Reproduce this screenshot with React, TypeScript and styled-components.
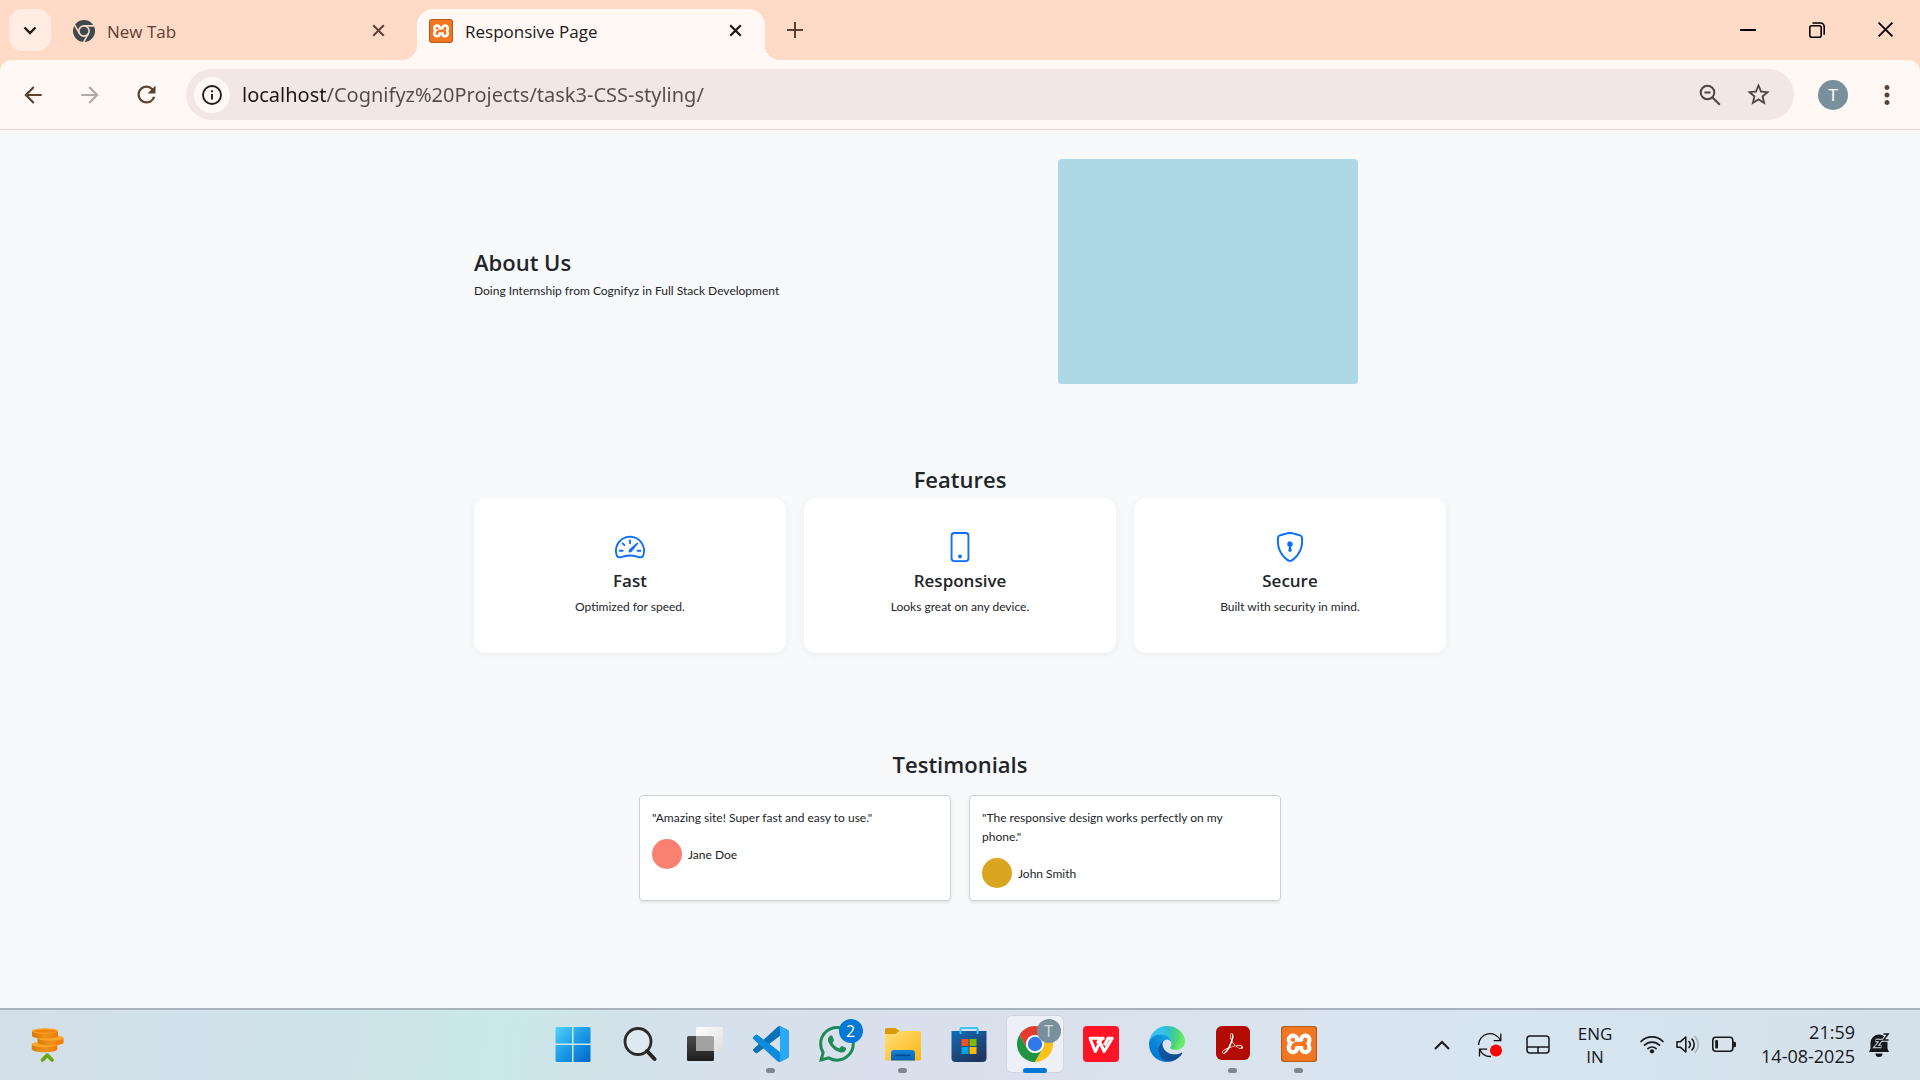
import React from "react";
import styled, { createGlobalStyle } from "styled-components";
import { BsSpeedometer2, BsPhone, BsShieldLock, BsWhatsapp } from "react-icons/bs";
import { MdArrowBack, MdArrowForward, MdRefresh, MdMoreVert, MdStarBorder } from "react-icons/md";
import { SiXampp, SiAdobeacrobatreader } from "react-icons/si";

const GlobalStyle = createGlobalStyle`
  *, *::before, *::after { box-sizing: border-box; }
  body {
    margin: 0;
    background: #f8f9fb;
    color: #212529;
    font-family: "Open Sans", "Noto Sans", sans-serif;
  }
  h1, h2, h3, p, figure, blockquote { margin: 0; }
  button {
    padding: 0;
    border: 0;
    background: none;
    color: inherit;
    font: inherit;
    cursor: pointer;
  }
  svg { display: block; flex: none; }
`;

const Window = styled.div`
  display: flex;
  flex-direction: column;
  min-height: 100vh;
`;

/* ---------- Browser frame ---------- */

const BrowserFrame = styled.header`
  background: #ffdac7;
`;

const TabStrip = styled.div`
  display: flex;
  align-items: flex-start;
  height: 60px;
  padding: 9px 0 0 9px;
`;

const TabSearch = styled.button`
  display: grid;
  place-items: center;
  width: 42px;
  height: 42px;
  margin-right: 10px;
  border-radius: 14px;
  background: #ffede4;
  color: #231a16;
`;

const Tab = styled.div<{ $active?: boolean }>`
  position: relative;
  display: flex;
  align-items: center;
  gap: 12px;
  flex: 0 1 ${(p) => (p.$active ? 348 : 356)}px;
  height: 51px;
  padding: 0 ${(p) => (p.$active ? 18 : 27)}px 8px 12px;
  border-radius: 16px 16px 0 0;
  background: ${(p) => (p.$active ? "#fff8f5" : "transparent")};
  color: ${(p) => (p.$active ? "#231a18" : "#5b4132")};

  &::before,
  &::after {
    content: "";
    display: ${(p) => (p.$active ? "block" : "none")};
    position: absolute;
    bottom: 0;
    width: 15px;
    height: 15px;
  }
  &::before {
    right: 100%;
    background: radial-gradient(circle at 0 0, transparent 15px, #fff8f5 15px);
  }
  &::after {
    left: 100%;
    background: radial-gradient(circle at 100% 0, transparent 15px, #fff8f5 15px);
  }
`;

const TabTitle = styled.span`
  flex: 1;
  padding-top: 2px;
  font-size: 17px;
  line-height: 24px;
  white-space: nowrap;
`;

const SmallButton = styled.button`
  display: grid;
  place-items: center;
  width: 24px;
  height: 24px;
`;

const NewTabButton = styled(SmallButton)`
  width: 32px;
  height: 42px;
  margin-left: 14px;
  color: #5b4132;
`;

const WindowControls = styled.div`
  display: flex;
  margin-left: auto;
  color: #000;
`;

const WindowButton = styled.button`
  display: grid;
  place-items: center;
  width: 69px;
  height: 41px;
`;

const Toolbar = styled.div`
  display: flex;
  align-items: center;
  height: 70px;
  padding: 0 18px 0 4px;
  border-bottom: 1px solid #f3d8d0;
  border-radius: 12px 12px 0 0;
  background: #fff8f5;
  color: #5b4132;
`;

const NavButton = styled.button`
  display: grid;
  place-items: center;
  width: 57px;
  height: 48px;

  &:disabled { color: #b3a8a4; }
`;

const Omnibox = styled.form`
  display: flex;
  align-items: center;
  flex: 1;
  height: 51px;
  margin: 0 24px 0 11px;
  padding: 0 18px 0 8px;
  border-radius: 26px;
  background: #f2e7e4;
  color: #4f4440;
`;

const SiteInfo = styled.button`
  display: grid;
  place-items: center;
  width: 36px;
  height: 36px;
  margin-right: 12px;
  border-radius: 50%;
  background: #fff8f5;
  color: #231a18;
`;

const Address = styled.input`
  flex: 1;
  min-width: 0;
  padding: 0;
  border: 0;
  outline: 0;
  /* the host is darker than the path that follows it */
  background: linear-gradient(90deg, #1f1613 84px, #574b47 84px);
  background-clip: text;
  -webkit-background-clip: text;
  color: transparent;
  font-family: "Noto Sans", sans-serif;
  font-size: 20px;
  line-height: 30px;
`;

const OmniButton = styled.button`
  display: grid;
  place-items: center;
  width: 36px;
  height: 36px;
  margin-left: 12px;
`;

const Profile = styled.button`
  width: 30px;
  height: 30px;
  margin-right: 24px;
  border-radius: 50%;
  background: #78909c;
  color: #fff;
  font-family: Roboto, sans-serif;
  font-size: 17px;
  line-height: 30px;
`;

const MenuButton = styled.button`
  display: grid;
  place-items: center;
  width: 30px;
  height: 36px;
`;

/* ---------- Page ---------- */

const Page = styled.main`
  flex: 1;
  width: 100%;
  max-width: 972px;
  margin: 0 auto;
  font-family: Lato, "Noto Sans", sans-serif;
  font-size: 12px;
  line-height: 19px;
`;

const Hero = styled.section`
  display: grid;
  grid-template-columns: 1fr 1fr;
  gap: 18px;
  align-items: center;
  padding: 29px 0 41px;
`;

const SectionTitle = styled.h2<{ $gap: number; $center?: boolean }>`
  margin-bottom: ${(p) => p.$gap}px;
  font-family: "Open Sans", sans-serif;
  font-size: 22px;
  font-weight: 600;
  line-height: 28px;
  text-align: ${(p) => (p.$center ? "center" : "left")};
`;

const HeroImage = styled.div`
  width: 300px;
  height: 225px;
  margin: 0 auto 4px;
  border-radius: 4px;
  background: #add8e6;
`;

const Section = styled.section`
  padding: 36px 0 61px;
`;

const FeatureGrid = styled.div`
  display: grid;
  grid-template-columns: repeat(3, 1fr);
  gap: 18px;
`;

const FeatureCard = styled.article`
  display: flex;
  flex-direction: column;
  align-items: center;
  padding: 34px 12px 37px;
  border-radius: 12px;
  background: #fff;
  box-shadow: 0 2px 8px rgba(0, 0, 0, 0.05);
  text-align: center;

  svg {
    margin-bottom: 8px;
    color: #0d6efd;
  }
`;

const FeatureTitle = styled.h3`
  margin-bottom: 5px;
  font-family: "Open Sans", sans-serif;
  font-size: 17px;
  font-weight: 550;
  line-height: 22px;
`;

const Quotes = styled.div`
  display: grid;
  grid-template-columns: repeat(2, 312px);
  justify-content: center;
  gap: 18px;
`;

const Quote = styled.figure`
  padding: 12px;
  border: 1px solid #d0d1d3;
  border-radius: 4px;
  background: #fff;
  box-shadow: 0 2px 3px rgba(0, 0, 0, 0.08);
`;

const QuoteText = styled.blockquote`
  padding-right: 12px;
`;

const Author = styled.figcaption`
  display: flex;
  align-items: center;
  gap: 6px;
  margin-top: 12px;
`;

const Avatar = styled.span<{ $color: string }>`
  width: 30px;
  height: 30px;
  border-radius: 50%;
  background: ${(p) => p.$color};
`;

/* ---------- Taskbar ---------- */

const Taskbar = styled.footer`
  display: grid;
  grid-template-columns: 28% auto 1fr;
  height: 72px;
  border-top: 2px solid #a8b3bd;
  background: linear-gradient(
    97deg,
    #d3dfe8 0%,
    #d1e0ea 10%,
    #cde4e9 20%,
    #c9e9ea 26%,
    #d3e2ea 32%,
    #d8e0ec 42%,
    #dadfec 50%,
    #d9e3ee 62%,
    #d7e5f0 78%,
    #d4e1eb 100%
  );
`;

const Widget = styled.button`
  justify-self: start;
  height: 70px;
  padding: 0 31px;
`;

const Apps = styled.nav`
  display: flex;
  gap: 10px;
  padding: 6px 5px 0 7px;
`;

const AppButton = styled.button<{ $active?: boolean }>`
  position: relative;
  display: flex;
  flex-direction: column;
  align-items: center;
  gap: 6px;
  width: 56px;
  height: 56px;
  padding-top: 10px;
  border-radius: 5px;
  background: ${(p) => (p.$active ? "#edf1f7" : "none")};
  box-shadow: ${(p) => (p.$active ? "0 0 0 1px #cfd6e1" : "none")};
`;

const Running = styled.span<{ $active?: boolean }>`
  flex: none;
  width: ${(p) => (p.$active ? 24 : 9)}px;
  height: 5px;
  border-radius: 3px;
  background: ${(p) => (p.$active ? "#0078d4" : "#7e868e")};
`;

const Badge = styled.span<{ $color: string; $ink: string }>`
  position: absolute;
  top: 3px;
  right: 2px;
  width: 24px;
  height: 24px;
  border-radius: 50%;
  background: ${(p) => p.$color};
  color: ${(p) => p.$ink};
  font-size: 16px;
  line-height: 24px;
  text-align: center;
`;

const WhatsappGlyph = styled(BsWhatsapp)`
  color: #1c8b57;
`;

const Tile = styled.span<{ $color: string }>`
  display: grid;
  place-items: center;
  flex: none;
  width: 36px;
  height: 36px;
  border-radius: 4px;
  background: ${(p) => p.$color};
  color: #fff;
`;

const AcrobatTile = styled(Tile)`
  width: 34px;
  height: 34px;
  margin-bottom: 2px;
  border-radius: 6px;
`;

const XamppTile = styled.span<{ $size: number }>`
  display: grid;
  place-items: center;
  flex: none;
  width: ${(p) => p.$size}px;
  height: ${(p) => p.$size}px;
  border-radius: 3px;
  background: linear-gradient(#fff, #fff) center / 84% 76% no-repeat, #c4631c;
  color: #f37623;
  box-shadow: inset 0 0 0 1px #b85b1a;

  svg {
    width: calc(100% - 2px);
    height: calc(100% - 2px);
  }
`;

const Tray = styled.div`
  display: flex;
  align-items: center;
  justify-content: flex-end;
  height: 70px;
  padding-right: 28px;
  color: #16191c;
  font-size: 17px;
  line-height: 24px;
`;

const TrayButton = styled.button<{ $width: number }>`
  display: flex;
  align-items: center;
  justify-content: center;
  gap: 12px;
  width: ${(p) => p.$width}px;
  height: 56px;
  line-height: 23px;
`;

const Clock = styled.button`
  margin: 0 13px;
  padding-bottom: 2px;
  font-size: 18px;
  line-height: 24px;
  text-align: right;
`;

const Line = styled.span`
  display: block;
`;

/* ---------- Drawings ---------- */

const Cross = ({ size, weight }: { size: number; weight: number }) => (
  <svg width={size} height={size} viewBox="0 0 16 16" fill="none" stroke="currentColor" strokeWidth={weight} aria-hidden>
    <path d="M1.5 1.5l13 13M14.5 1.5l-13 13" />
  </svg>
);

const StartIcon = () => (
  <svg width="36" height="36" viewBox="0 0 36 36" aria-hidden>
    <defs>
      <linearGradient id="start" x1="0" y1="0" x2="36" y2="36" gradientUnits="userSpaceOnUse">
        <stop offset="0" stopColor="#55d5ff" />
        <stop offset="0.5" stopColor="#1c9be6" />
        <stop offset="1" stopColor="#0067c8" />
      </linearGradient>
    </defs>
    <path
      fill="url(#start)"
      d="M2 1h15v16.500H.5V2.500A1.500 1.500 0 0 1 2 1zM18.500 1H34a1.500 1.500 0 0 1 1.500 1.500v15h-17zM.5 19H17v17H2A1.500 1.500 0 0 1 .5 34.500zM18.500 19h17v15.500A1.500 1.500 0 0 1 34 36H18.500z"
    />
  </svg>
);

const SearchIcon = () => (
  <svg width="36" height="36" viewBox="0 0 36 36" fill="none" aria-hidden>
    <circle cx="17" cy="15.500" r="13" stroke="#2b2b2b" strokeWidth="2.800" fill="#e6eef4" fillOpacity="0.600" />
    <path d="M26 25l7.500 8" stroke="#262626" strokeWidth="4" strokeLinecap="round" />
  </svg>
);

const TaskViewIcon = () => (
  <svg width="36" height="36" viewBox="0 0 36 36" aria-hidden>
    <defs>
      <linearGradient id="back" x1="0" y1="0" x2="0" y2="1">
        <stop offset="0" stopColor="#4b4b4b" />
        <stop offset="1" stopColor="#1f1f1f" />
      </linearGradient>
      <linearGradient id="front" x1="0" y1="0" x2="1" y2="1">
        <stop offset="0" stopColor="#fff" />
        <stop offset="1" stopColor="#dedede" />
      </linearGradient>
    </defs>
    <rect x="0" y="10" width="27" height="25" rx="1.500" fill="url(#back)" />
    <rect x="9" y="1" width="27" height="24" rx="1.500" fill="url(#front)" />
    <path d="M9 10h16.500A1.500 1.500 0 0 1 27 11.500V25H9z" fill="#a2a2a2" />
  </svg>
);

const CodeIcon = () => (
  <svg width="36" height="36" viewBox="0 0 24 24" aria-hidden>
    <path
      fill="#0a70b8"
      d="M23.150 2.587L18.210.210a1.494 1.494 0 0 0-1.705.290l-9.460 8.630-4.120-3.128a.999.999 0 0 0-1.276.057L.327 7.261A1 1 0 0 0 .326 8.740L3.899 12 .326 15.260a1 1 0 0 0 .001 1.479L1.650 17.940a.999.999 0 0 0 1.276.057l4.120-3.128 9.460 8.630a1.492 1.492 0 0 0 1.704.290l4.942-2.377A1.500 1.500 0 0 0 24 20.060V3.939a1.500 1.500 0 0 0-.850-1.352zm-5.146 14.861L10.826 12l7.178-5.448v10.896z"
    />
    <path
      fill="#0e8bdb"
      d="M1.650 6.060L.327 7.261A1 1 0 0 0 .326 8.740L16.500 23.500 18 22.500v-5.052L2.926 6.003a1 1 0 0 0-1.276.057z"
    />
    <path
      fill="#2aa9f4"
      d="M18.210.210l4.940 2.377A1.500 1.500 0 0 1 24 3.939V20.060a1.500 1.500 0 0 1-.850 1.353l-4.940 2.377a1.490 1.490 0 0 1-1.700-.290c.560.560 1.490.160 1.490-.600V1.100c0-.760-.930-1.160-1.490-.600a1.494 1.494 0 0 1 1.700-.290z"
    />
  </svg>
);

const FolderIcon = () => (
  <svg width="36" height="36" viewBox="0 0 36 36" aria-hidden>
    <defs>
      <linearGradient id="folder" x1="0" y1="0" x2="1" y2="1">
        <stop offset="0" stopColor="#ffdf78" />
        <stop offset="1" stopColor="#fbb615" />
      </linearGradient>
      <linearGradient id="tray" x1="0" y1="0" x2="0" y2="1">
        <stop offset="0" stopColor="#1583d8" />
        <stop offset="1" stopColor="#0765b8" />
      </linearGradient>
    </defs>
    <path d="M1.500 2H10c1.500 0 2.500 2.500 4.500 2.500V12H0V3.500A1.500 1.500 0 0 1 1.500 2z" fill="#dc9a05" />
    <path d="M0 8h10c2 0 2.500-3 5-3h19.500A1.500 1.500 0 0 1 36 6.500V33a1.500 1.500 0 0 1-1.500 1.500h-33A1.500 1.500 0 0 1 0 33z" fill="url(#folder)" />
    <path d="M6 34.500V27a3 3 0 0 1 3-3h18a3 3 0 0 1 3 3v7.500z" fill="url(#tray)" />
    <rect x="10" y="28.500" width="15.500" height="1.800" rx="0.900" fill="#084a8c" />
  </svg>
);

const StoreIcon = () => (
  <svg width="36" height="36" viewBox="0 0 36 36" aria-hidden>
    <defs>
      <linearGradient id="bag" x1="0" y1="0" x2="0.600" y2="1">
        <stop offset="0" stopColor="#0f6cb8" />
        <stop offset="1" stopColor="#22365f" />
      </linearGradient>
    </defs>
    <path d="M.5 5h35v27a4 4 0 0 1-4 4h-27a4 4 0 0 1-4-4z" fill="url(#bag)" />
    <path d="M9.500 8V3a1 1 0 0 1 1-1h15a1 1 0 0 1 1 1v5" fill="none" stroke="#38c6f4" strokeWidth="2" />
    <path d="M10.500 13h7v7h-7z" fill="#f25022" />
    <path d="M18.500 13h7v7h-7z" fill="#7fba00" />
    <path d="M10.500 21h7v7h-7z" fill="#00a4ef" />
    <path d="M18.500 21h7v7h-7z" fill="#ffb900" />
  </svg>
);

const ChromeIcon = () => (
  <svg width="36" height="36" viewBox="0 0 24 24" aria-hidden>
    <path fill="#e33b2e" d="M12 6h10.390A12 12 0 0 0 1.610 6l5.190 9A6 6 0 0 1 12 6z" />
    <path fill="#229342" d="M6.800 15L1.610 6A12 12 0 0 0 12 24l5.200-9A6 6 0 0 1 6.800 15z" />
    <path fill="#fbc116" d="M17.200 15L12 24A12 12 0 0 0 22.390 6H12a6 6 0 0 1 5.200 9z" />
    <circle cx="12" cy="12" r="6" fill="#fff" />
    <circle cx="12" cy="12" r="4.800" fill="#2f77ea" />
  </svg>
);

const ChromeFavicon = () => (
  <svg width="22" height="22" viewBox="0 0 24 24" aria-hidden>
    <circle cx="12" cy="12" r="12" fill="#3f484b" />
    <circle cx="12" cy="12" r="5.600" fill="none" stroke="#ffdac7" strokeWidth="1.700" />
    <path d="M12 6.400h11M7.150 14.800L1.650 5.300M16.850 14.800L11.400 24.300" stroke="#ffdac7" strokeWidth="1.700" />
  </svg>
);

const WpsGlyph = () => (
  <svg width="36" height="36" viewBox="0 0 36 36" fill="none" stroke="#fff" strokeWidth="3" strokeLinejoin="round" aria-hidden>
    <path d="M14.500 17.500l2.300-5.300H7L12.300 25.500 19 12.200h2.500" />
    <path d="M17.500 17.500l3.700 8L29.300 12.200H25l-3.600 7" />
  </svg>
);

const EdgeIcon = () => (
  <svg width="36" height="36" viewBox="0 0 256 256" aria-hidden>
    <defs>
      <linearGradient id="edgeLow" x1="63" y1="177" x2="241" y2="177" gradientUnits="userSpaceOnUse">
        <stop offset="0" stopColor="#0c59a4" />
        <stop offset="1" stopColor="#114a8b" />
      </linearGradient>
      <linearGradient id="edgeMid" x1="160" y1="100" x2="46" y2="224" gradientUnits="userSpaceOnUse">
        <stop offset="0" stopColor="#1b9de2" />
        <stop offset="0.200" stopColor="#1595df" />
        <stop offset="0.700" stopColor="#0680d7" />
        <stop offset="1" stopColor="#0078d4" />
      </linearGradient>
      <radialGradient id="edgeTop" cx="26" cy="45" r="220" gradientUnits="userSpaceOnUse">
        <stop offset="0" stopColor="#35c1f1" />
        <stop offset="0.300" stopColor="#34c1ed" />
        <stop offset="0.550" stopColor="#2fc2c8" />
        <stop offset="0.850" stopColor="#52d56f" />
        <stop offset="1" stopColor="#66eb6e" />
      </radialGradient>
    </defs>
    <g transform="translate(-4.630 -4.920)">
      <path
        fill="url(#edgeLow)"
        d="M235.680 195.460a93.730 93.730 0 0 1-10.540 4.710 101.870 101.870 0 0 1-35.900 6.460c-47.320 0-88.540-32.550-88.540-74.320A31.480 31.480 0 0 1 117.130 105c-42.800 1.800-53.800 46.400-53.800 72.530 0 73.880 68.090 81.370 82.760 81.370 7.910 0 19.840-2.300 27-4.560l1.310-.440a128.340 128.340 0 0 0 66.600-52.800 4 4 0 0 0-5.320-5.640z"
      />
      <path
        fill="url(#edgeMid)"
        d="M110.340 246.340A79.200 79.200 0 0 1 87.600 225a80.720 80.720 0 0 1 29.530-120c3.120-1.470 8.450-4.130 15.540-4a32.350 32.350 0 0 1 25.690 13 31.880 31.880 0 0 1 6.360 18.660c0-.210 24.460-79.600-80-79.600-43.900 0-80 41.660-80 78.210a130.150 130.150 0 0 0 12.110 56 128 128 0 0 0 156.380 67.110 75.550 75.550 0 0 1-62.780-8z"
      />
      <path
        fill="url(#edgeTop)"
        d="M156.940 153.780c-.810 1.050-3.300 2.500-3.300 5.660 0 2.610 1.700 5.120 4.720 7.230 14.380 10 41.490 8.680 41.560 8.680a59.560 59.560 0 0 0 30.270-8.350 61.380 61.380 0 0 0 30.430-52.880c.260-22.410-8-37.310-11.340-43.910C228.090 28.760 182.350 4.920 132.610 4.920a128 128 0 0 0-128 126.200c.480-36.540 36.800-66.050 80-66.050 3.500 0 23.460.340 42 10.070 16.340 8.580 24.900 18.940 30.850 29.210 6.180 10.670 7.280 24.150 7.280 29.520s-2.740 13.330-7.800 19.910z"
      />
    </g>
  </svg>
);

const CoinsIcon = () => (
  <svg width="34" height="36" viewBox="0 0 34 36" aria-hidden>
    <defs>
      <linearGradient id="coin" x1="0" y1="0" x2="1" y2="0">
        <stop offset="0" stopColor="#d87a0c" />
        <stop offset="0.500" stopColor="#f09217" />
        <stop offset="1" stopColor="#ee7a05" />
      </linearGradient>
    </defs>
    <path d="M.8 17.500v4.700c0 4 25.500 4 25.500 0v-4.700z" fill="url(#coin)" />
    <ellipse cx="13.500" cy="17.500" rx="12.800" ry="2.700" fill="#ffa629" />
    <path d="M6.500 11v4.500c0 4 26 4 26 0V11z" fill="url(#coin)" />
    <ellipse cx="19.500" cy="11" rx="13" ry="2.700" fill="#ffa629" />
    <path d="M1 4v4.700c0 4 26 4 26 0V4z" fill="url(#coin)" />
    <ellipse cx="14" cy="4" rx="13" ry="2.700" fill="#fca326" />
    <ellipse cx="14" cy="4.200" rx="11.500" ry="1.500" fill="#f08205" />
    <path d="M11.500 33l4.800-4.800L21 33" fill="none" stroke="#6aa811" strokeWidth="3.800" strokeLinecap="round" strokeLinejoin="round" />
  </svg>
);

const WifiIcon = () => (
  <svg width="24" height="24" viewBox="0 0 24 24" fill="none" stroke="currentColor" strokeWidth="1.700" strokeLinecap="round" aria-hidden>
    <path d="M1 8.500a15.600 15.600 0 0 1 22 0M4.500 12.200a10.600 10.600 0 0 1 15 0M8 15.700a5.600 5.600 0 0 1 8 0" />
    <circle cx="12" cy="18.300" r="2.100" fill="currentColor" stroke="none" />
  </svg>
);

const VolumeIcon = () => (
  <svg width="24" height="24" viewBox="0 0 24 24" fill="none" stroke="currentColor" strokeWidth="1.600" strokeLinecap="round" strokeLinejoin="round" aria-hidden>
    <path d="M1 8.700h3.500L9.800 4v15l-5.300-4.700H1z" />
    <path d="M13 8.500a4.500 4.500 0 0 1 0 6M16 6a8 8 0 0 1 0 11" />
    <path d="M19 3.500a11.500 11.500 0 0 1 0 16" stroke="#aab4bd" />
  </svg>
);

const BatteryIcon = () => (
  <svg width="24" height="24" viewBox="0 0 24 24" fill="none" stroke="currentColor" strokeWidth="1.600" aria-hidden>
    <rect x="0.800" y="4.300" width="20" height="14" rx="3" />
    <rect x="3.200" y="7" width="2.800" height="8.600" rx="1" fill="currentColor" stroke="none" />
    <path d="M22 9.500v4l2-.800v-2.400z" fill="currentColor" />
  </svg>
);

const SyncIcon = () => (
  <svg width="26" height="26" viewBox="0 0 26 26" fill="none" stroke="#111" strokeWidth="1.300" aria-hidden>
    <path d="M1.500 13A11.500 11.500 0 0 1 23.500 8.500M23.800 1.500v7.200h-7.200M2.500 24.500v-7.300h7.700M2.800 17.500A11.500 11.500 0 0 0 14 24.500" />
    <circle cx="19" cy="18.500" r="6" fill="#fe0000" stroke="none" />
  </svg>
);

const TouchpadIcon = () => (
  <svg width="24" height="20" viewBox="0 0 24 20" fill="none" stroke="currentColor" strokeWidth="1.500" aria-hidden>
    <rect x="1" y="1" width="22" height="17" rx="3" />
    <path d="M1 12h22M12 12v6" />
  </svg>
);

const BellIcon = () => (
  <svg width="22" height="24" viewBox="0 0 22 24" aria-hidden>
    <path d="M1.500 15.500V10a8.500 8.500 0 0 1 17 0v5.500l1.500 3.500H0zM6.500 20.500h7a3.500 3.500 0 0 1-7 0z" fill="#16191c" />
    <path d="M6.500 7.500H12l-5 6h5.500M14.500 1H19l-4.500 6H19" fill="none" stroke="#dce6ef" strokeWidth="3.400" />
    <path d="M6.800 7.500H12l-5 6h5.300M14.500 1H19.200l-4.700 6H19.500" fill="none" stroke="#16191c" strokeWidth="1.500" />
  </svg>
);

const Xampp = ({ size }: { size: number }) => (
  <XamppTile $size={size}>
    <SiXampp aria-hidden />
  </XamppTile>
);

/* ---------- Data ---------- */

const features = [
  { Icon: BsSpeedometer2, title: "Fast", text: "Optimized for speed." },
  { Icon: BsPhone, title: "Responsive", text: "Looks great on any device." },
  { Icon: BsShieldLock, title: "Secure", text: "Built with security in mind." },
];

const quotes = [
  { text: '"Amazing site! Super fast and easy to use."', name: "Jane Doe", color: "#fa8072" },
  { text: '"The responsive design works perfectly on my phone."', name: "John Smith", color: "#daa520" },
];

type AppEntry = {
  name: string;
  icon: React.ReactNode;
  running?: boolean;
  active?: boolean;
  badge?: { text: string; color: string; ink: string };
};

const apps: AppEntry[] = [
  { name: "Start", icon: <StartIcon /> },
  { name: "Search", icon: <SearchIcon /> },
  { name: "Task view", icon: <TaskViewIcon /> },
  { name: "Visual Studio Code", icon: <CodeIcon />, running: true },
  { name: "WhatsApp", icon: <WhatsappGlyph size={36} />, badge: { text: "2", color: "#0078d4", ink: "#fff" } },
  { name: "File Explorer", icon: <FolderIcon />, running: true },
  { name: "Microsoft Store", icon: <StoreIcon /> },
  { name: "Google Chrome", icon: <ChromeIcon />, running: true, active: true, badge: { text: "T", color: "#78909c", ink: "#d3dade" } },
  { name: "WPS Office", icon: <Tile $color="#ff1425"><WpsGlyph /></Tile> },
  { name: "Microsoft Edge", icon: <EdgeIcon /> },
  { name: "Adobe Acrobat", icon: <AcrobatTile $color="#b30b00"><SiAdobeacrobatreader size={21} /></AcrobatTile>, running: true },
  { name: "XAMPP", icon: <Xampp size={36} />, running: true },
];

/* ---------- Regions ---------- */

const Browser = () => (
  <BrowserFrame>
    <TabStrip>
      <TabSearch aria-label="Search tabs">
        <svg width="14" height="14" viewBox="0 0 14 14" fill="none" stroke="currentColor" strokeWidth="2.400" aria-hidden>
          <path d="M1.500 4.500L7 10l5.500-5.500" />
        </svg>
      </TabSearch>
      <Tab>
        <ChromeFavicon />
        <TabTitle>New Tab</TabTitle>
        <SmallButton aria-label="Close New Tab"><Cross size={13} weight={2.500} /></SmallButton>
      </Tab>
      <Tab $active>
        <Xampp size={24} />
        <TabTitle>Responsive Page</TabTitle>
        <SmallButton aria-label="Close Responsive Page"><Cross size={13} weight={2.800} /></SmallButton>
      </Tab>
      <NewTabButton aria-label="New tab">
        <svg width="16" height="16" viewBox="0 0 16 16" stroke="currentColor" strokeWidth="2" aria-hidden>
          <path d="M8 0v16M0 8h16" />
        </svg>
      </NewTabButton>
      <WindowControls>
        <WindowButton aria-label="Minimize">
          <svg width="16" height="16" viewBox="0 0 16 16" stroke="currentColor" strokeWidth="2" aria-hidden>
            <path d="M0 8h16" />
          </svg>
        </WindowButton>
        <WindowButton aria-label="Restore">
          <svg width="16" height="16" viewBox="0 0 16 16" fill="none" stroke="currentColor" strokeWidth="1.600" aria-hidden>
            <rect x="0.800" y="3.800" width="11.400" height="11.400" rx="2" />
            <path d="M3.500 1h8A3.700 3.700 0 0 1 15.200 4.700v8" />
          </svg>
        </WindowButton>
        <WindowButton aria-label="Close"><Cross size={17} weight={1.700} /></WindowButton>
      </WindowControls>
    </TabStrip>
    <Toolbar>
      <NavButton aria-label="Back"><MdArrowBack size={26} /></NavButton>
      <NavButton aria-label="Forward" disabled><MdArrowForward size={26} /></NavButton>
      <NavButton aria-label="Reload"><MdRefresh size={27} /></NavButton>
      <Omnibox onSubmit={(e) => e.preventDefault()}>
        <SiteInfo type="button" aria-label="View site information">
          <svg width="20" height="20" viewBox="0 0 20 20" fill="none" stroke="currentColor" strokeWidth="1.900" aria-hidden>
            <circle cx="10" cy="10" r="9" />
            <path d="M10 9v5.500M10 5.300v2" />
          </svg>
        </SiteInfo>
        <Address aria-label="Address" defaultValue="localhost/Cognifyz%20Projects/task3-CSS-styling/" spellCheck={false} />
        <OmniButton type="button" aria-label="Zoom out">
          <svg width="22" height="22" viewBox="0 0 22 22" fill="none" stroke="currentColor" strokeWidth="2" aria-hidden>
            <circle cx="8.500" cy="8.500" r="6.800" />
            <path d="M13.300 13.300l7.500 7.500M5.500 8.500h6" />
          </svg>
        </OmniButton>
        <OmniButton type="button" aria-label="Bookmark this tab"><MdStarBorder size={27} /></OmniButton>
      </Omnibox>
      <Profile aria-label="Profile T">T</Profile>
      <MenuButton aria-label="Menu"><MdMoreVert size={30} /></MenuButton>
    </Toolbar>
  </BrowserFrame>
);

const Content = () => (
  <Page>
    <Hero>
      <div>
        <SectionTitle $gap={5}>About Us</SectionTitle>
        <p>Doing Internship from Cognifyz in Full Stack Development</p>
      </div>
      <HeroImage />
    </Hero>
    <Section>
      <SectionTitle $gap={5} $center>Features</SectionTitle>
      <FeatureGrid>
        {features.map(({ Icon, title, text }) => (
          <FeatureCard key={title}>
            <Icon size={30} aria-hidden />
            <FeatureTitle>{title}</FeatureTitle>
            <p>{text}</p>
          </FeatureCard>
        ))}
      </FeatureGrid>
    </Section>
    <Section>
      <SectionTitle $gap={17} $center>Testimonials</SectionTitle>
      <Quotes>
        {quotes.map((q) => (
          <Quote key={q.name}>
            <QuoteText>{q.text}</QuoteText>
            <Author>
              <Avatar $color={q.color} />
              {q.name}
            </Author>
          </Quote>
        ))}
      </Quotes>
    </Section>
  </Page>
);

const Desktop = () => (
  <Taskbar>
    <Widget aria-label="Widgets"><CoinsIcon /></Widget>
    <Apps aria-label="Apps">
      {apps.map((app) => (
        <AppButton key={app.name} aria-label={app.name} $active={app.active}>
          {app.icon}
          {app.running && <Running $active={app.active} />}
          {app.badge && <Badge $color={app.badge.color} $ink={app.badge.ink}>{app.badge.text}</Badge>}
        </AppButton>
      ))}
    </Apps>
    <Tray>
      <TrayButton $width={48} aria-label="Hidden icons">
        <svg width="16" height="10" viewBox="0 0 16 10" fill="none" stroke="currentColor" strokeWidth="2" aria-hidden>
          <path d="M1 9l7-7 7 7" />
        </svg>
      </TrayButton>
      <TrayButton $width={48} aria-label="Updates"><SyncIcon /></TrayButton>
      <TrayButton $width={48} aria-label="Touchpad"><TouchpadIcon /></TrayButton>
      <TrayButton $width={66}>
        <span>
          <Line>ENG</Line>
          <Line>IN</Line>
        </span>
      </TrayButton>
      <TrayButton $width={120} aria-label="Network, volume, battery">
        <WifiIcon />
        <VolumeIcon />
        <BatteryIcon />
      </TrayButton>
      <Clock>
        <Line>21:59</Line>
        <Line>14-08-2025</Line>
      </Clock>
      <SmallButton aria-label="Notifications"><BellIcon /></SmallButton>
    </Tray>
  </Taskbar>
);

export default function App() {
  return (
    <Window>
      <GlobalStyle />
      <Browser />
      <Content />
      <Desktop />
    </Window>
  );
}
